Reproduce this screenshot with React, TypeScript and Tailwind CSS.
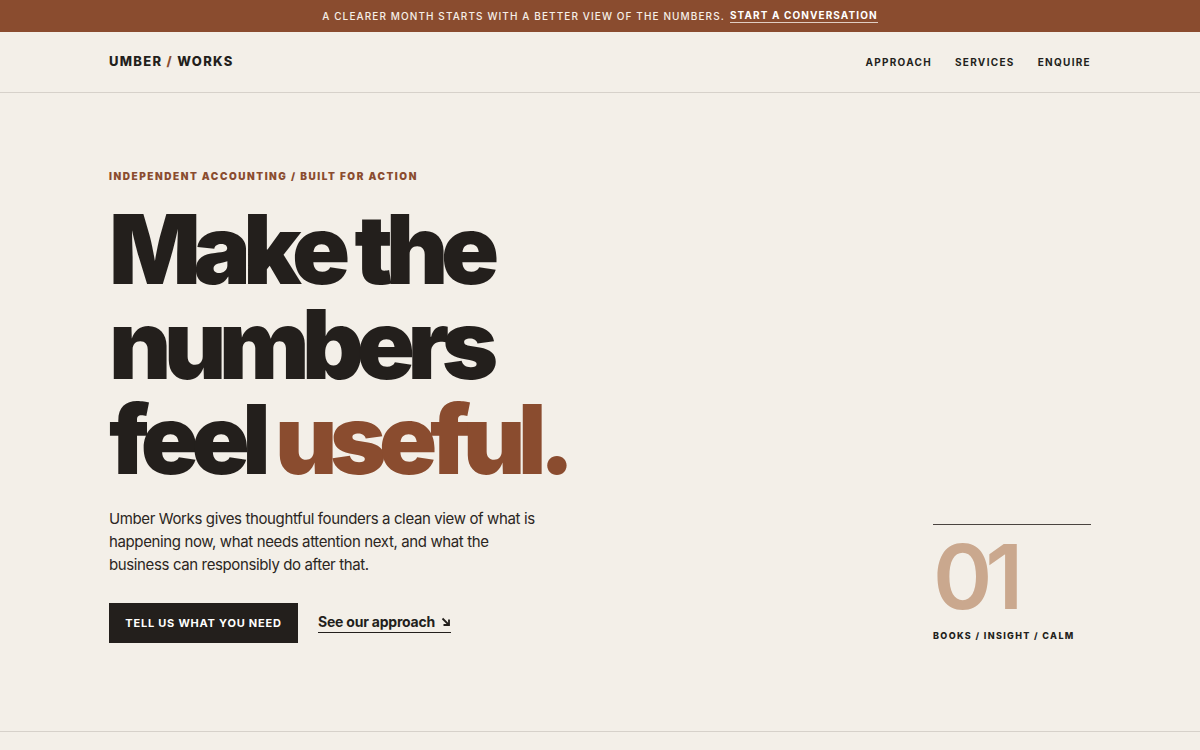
import React from "react";

const font = { fontFamily: "Inter, 'Noto Sans', sans-serif" };

const TopBanner = () => (
  <div className="flex h-8 items-center justify-center bg-[#8a4c2f] text-[10px] font-medium uppercase tracking-[0.11em] text-[#f6efe8]">
    <span>A clearer month starts with a better view of the numbers.</span>
    <a className="ml-[5px] border-b border-[#f6efe8]/80 font-bold leading-[13px] text-white">Start a conversation</a>
  </div>
);

const Header = () => (
  <header className="flex h-[61px] items-center justify-between border-b border-[#d6d1ca] px-[109px]">
    <div className="text-[13px] font-extrabold uppercase tracking-[0.1em] text-[#231f1c]">
      Umber <span className="text-[#8a4c2f]">/</span> Works
    </div>
    <nav className="flex gap-[23px] text-[10px] font-bold uppercase tracking-[0.13em] text-[#231f1c]">
      <a>Approach</a>
      <a>Services</a>
      <a>Enquire</a>
    </nav>
  </header>
);

const Hero = () => (
  <section className="flex h-[639px] items-end justify-between border-b border-[#d6d1ca] px-[109px] pb-[88px]">
    <div>
      <p className="text-[10px] font-black uppercase tracking-[0.155em] text-[#8a4c2f]">
        Independent accounting / built for action
      </p>
      <h1 className="mt-[18px] text-[96px] font-black leading-[95px] tracking-[-0.077em] text-[#231f1c]">
        Make the
        <br />
        numbers
        <br />
        feel <span className="text-[#8a4c2f]">useful.</span>
      </h1>
      <p className="mt-[20px] w-[440px] text-[15px] leading-[23px] tracking-[-0.025em] text-[#2b2622]">
        Umber Works gives thoughtful founders a clean view of what is happening now, what needs attention next, and what the business can responsibly do after that.
      </p>
      <div className="mt-[27px] flex items-center gap-5">
        <a className="flex h-10 w-[189px] items-center justify-center bg-[#231f1c] text-[11px] font-bold uppercase tracking-[0.07em] text-white">
          Tell us what you need
        </a>
        <a className="flex items-center gap-[6px] border-b border-[#231f1c] pb-[1px] text-[14px] font-bold leading-[18px] tracking-[-0.015em] text-[#231f1c]">
          See our approach
          <svg width="10" height="10" viewBox="0 0 10 10" fill="none" stroke="#231f1c" strokeWidth="1.8">
            <path d="M1.5 1.5 L8 8" />
            <path d="M8 2.5 V8 H2.5" />
          </svg>
        </a>
      </div>
    </div>
    <div className="mb-[1px] w-[158px] border-t border-[#4a4440] pt-[7px]">
      <div className="text-[90px] font-semibold leading-[90px] tracking-[-0.08em] text-[#caa88e]">01</div>
      <p className="mt-[7px] text-[9px] font-extrabold uppercase tracking-[0.15em] text-[#231f1c]">
        Books / Insight / Calm
      </p>
    </div>
  </section>
);

export default function App() {
  return (
    <div className="min-h-[750px] bg-[#f3efe8]" style={font}>
      <TopBanner />
      <Header />
      <Hero />
    </div>
  );
}
